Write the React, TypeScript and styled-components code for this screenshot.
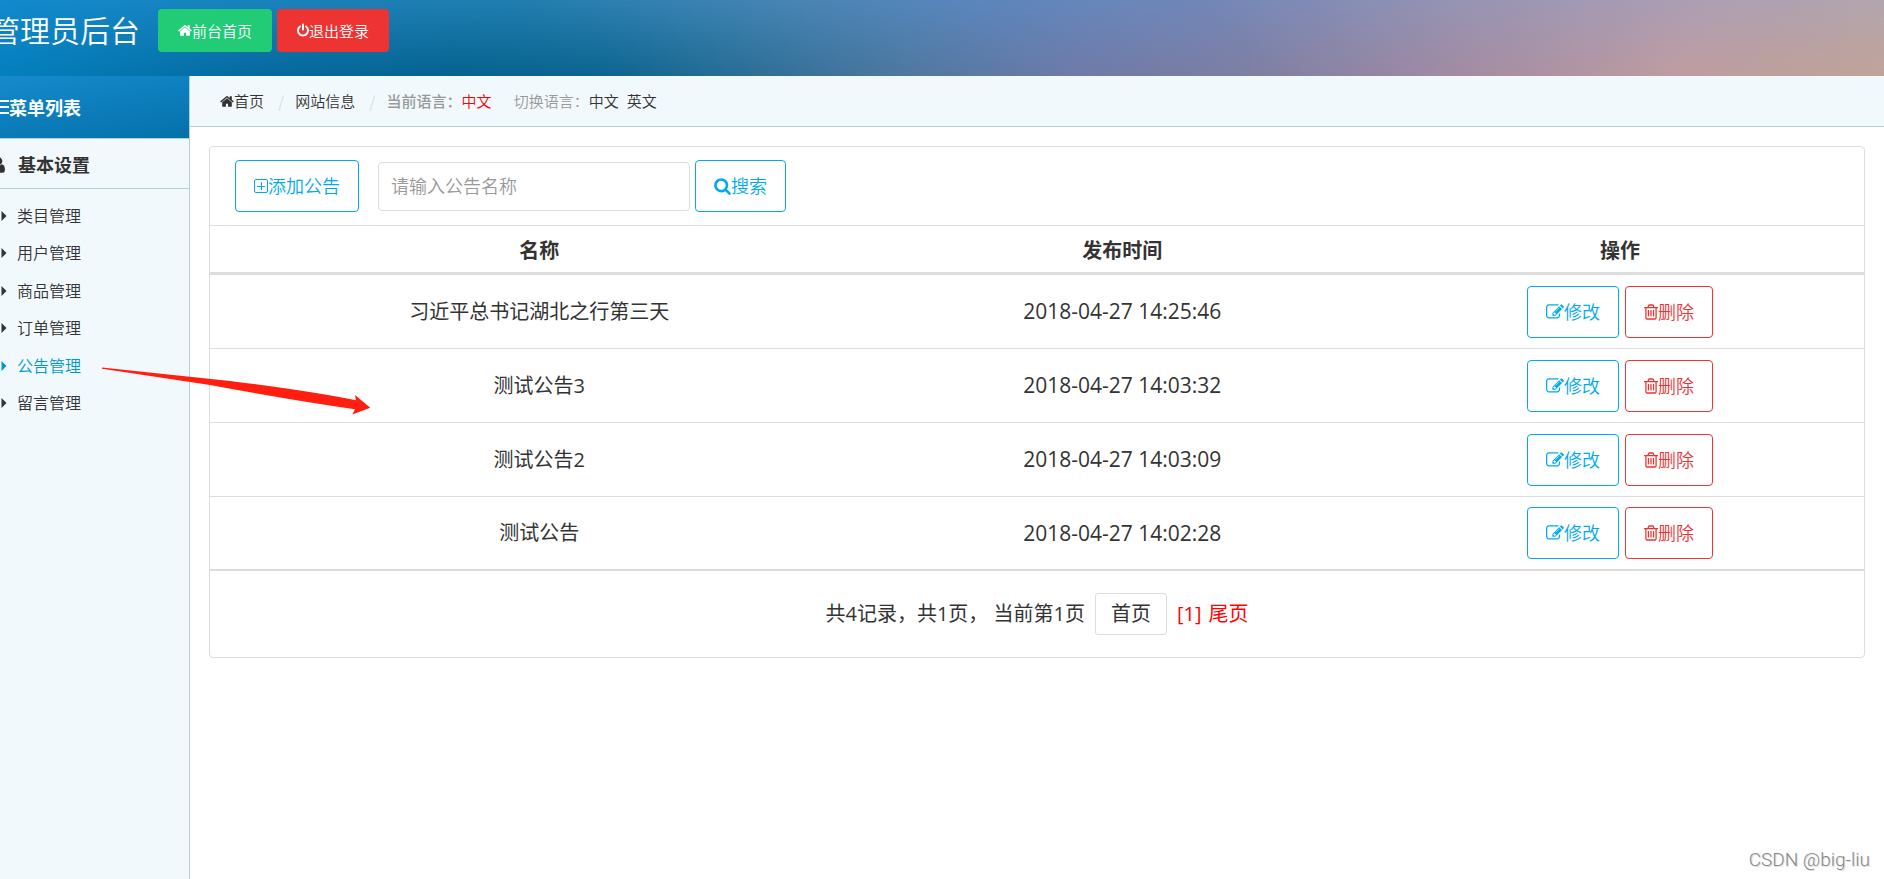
import React from 'react';
import styled, { createGlobalStyle, css } from 'styled-components';

const GlobalStyle = createGlobalStyle`
  *, *::before, *::after { box-sizing: border-box; }
  body {
    margin: 0;
    background: #fff;
    color: #333;
    font-family: 'Open Sans', 'Noto Sans CJK SC', sans-serif;
    font-size: 15px;
    font-weight: 350;
    line-height: 24px;
  }
  a { color: inherit; text-decoration: none; }
  ul, ol { list-style: none; margin: 0; padding: 0; }
  button, input { font-family: inherit; font-weight: 350; }
`;

/* ---------- icons ---------- */

const Glyph = styled.svg<{ $w: number; $h: number }>`
  flex: none;
  display: block;
  width: ${p => p.$w}px;
  height: ${p => p.$h}px;
  fill: currentColor;
`;

const HomeIcon = () => (
  <Glyph $w={14} $h={15} viewBox="64 0 1664 1792" aria-hidden="true">
    <path d="M1472 992v480q0 26-19 45t-45 19h-384v-384h-256v384h-384q-26 0-45-19t-19-45v-480q0-1 .5-3t.5-3l575-474 575 474q1 2 1 6zm223-69l-62 74q-8 9-21 11h-3q-13 0-21-7l-692-577-692 577q-12 8-24 7-13-2-21-11l-62-74q-8-10-7-23.500t11-21.500l719-599q32-26 76-26t76 26l244 204v-195q0-14 9-23t23-9h192q14 0 23 9t9 23v408l219 182q10 8 11 21.500t-7 23.500z" />
  </Glyph>
);

const PowerIcon = () => (
  <Glyph $w={12} $h={15} viewBox="128 0 1536 1792" aria-hidden="true">
    <path d="M1664 896q0 156-61 298t-164 245-245 164-298 61-298-61-245-164-164-245-61-298q0-182 80.500-343t226.500-270q43-32 95.500-25t83.500 50q32 42 24.500 94.500t-49.500 84.500q-98 74-151.500 181t-53.500 228q0 104 40.500 198.500t109.500 163.500 163.500 109.500 198.500 40.500 198.500-40.500 163.500-109.500 109.500-163.500 40.500-198.500q0-121-53.500-228t-151.500-181q-42-32-49.500-84.500t24.500-94.500q31-43 84-50t95 25q146 109 226.500 270t80.500 343zm-640-768v640q0 52-38 90t-90 38-90-38-38-90v-640q0-52 38-90t90-38 90 38 38 90z" />
  </Glyph>
);

const SearchIcon = () => (
  <Glyph $w={17} $h={18} viewBox="64 0 1664 1792" aria-hidden="true">
    <path d="M1216 832q0-185-131.500-316.500t-316.500-131.500-316.500 131.500-131.500 316.500 131.500 316.500 316.500 131.500 316.500-131.500 131.500-316.500zm512 832q0 52-38 90t-90 38q-54 0-90-38l-343-342q-179 124-399 124-143 0-273.500-55.500t-225-150-150-225-55.500-273.500 55.500-273.500 150-225 225-150 273.500-55.500 273.500 55.500 225 150 150 225 55.500 273.500q0 220-124 399l343 343q37 37 37 90z" />
  </Glyph>
);

const EditIcon = () => (
  <Glyph $w={18} $h={18} viewBox="0 0 1792 1792" aria-hidden="true">
    <path d="M888 1184l116-116-152-152-116 116v56h96v96h56zm440-720q-16-16-33 1l-350 350q-17 17-1 33t33-1l350-350q17-17 1-33zm80 594v190q0 119-84.500 203.500t-203.500 84.500h-832q-119 0-203.500-84.500t-84.500-203.500v-832q0-119 84.500-203.500t203.500-84.500h832q63 0 117 25 15 7 18 23 3 17-9 29l-49 49q-14 14-32 8-23-6-45-6h-832q-66 0-113 47t-47 113v832q0 66 47 113t113 47h832q66 0 113-47t47-113v-126q0-13 9-22l64-64q15-15 35-7t20 29zm-96-738l288 288-672 672h-288v-288zm444 132l-92 92-288-288 92-92q28-28 68-28t68 28l152 152q28 28 28 68t-28 68z" />
  </Glyph>
);

const TrashIcon = () => (
  <Glyph $w={14} $h={18} viewBox="192 0 1408 1792" aria-hidden="true">
    <path d="M704 736v576q0 14-9 23t-23 9h-64q-14 0-23-9t-9-23v-576q0-14 9-23t23-9h64q14 0 23 9t9 23zm256 0v576q0 14-9 23t-23 9h-64q-14 0-23-9t-9-23v-576q0-14 9-23t23-9h64q14 0 23 9t9 23zm256 0v576q0 14-9 23t-23 9h-64q-14 0-23-9t-9-23v-576q0-14 9-23t23-9h64q14 0 23 9t9 23zm128 724v-948h-896v948q0 22 7 40.500t14.500 27 10.500 8.500h832q3 0 10.500-8.500t14.500-27 7-40.500zm-672-1076h448l-48-117q-7-9-17-11h-317q-10 2-17 11zm928 32v64q0 14-9 23t-23 9h-96v948q0 83-47 143.500t-113 60.500h-832q-66 0-113-58.500t-47-141.500v-952h-96q-14 0-23-9t-9-23v-64q0-14 9-23t23-9h309l70-167q15-37 54-63t79-26h320q40 0 79 26t54 63l70 167h309q14 0 23 9t9 23z" />
  </Glyph>
);

const PlusSquareIcon = () => (
  <Glyph $w={14} $h={18} viewBox="0 0 14 18" aria-hidden="true">
    <path
      d="M2 2.500h10a1.500 1.500 0 0 1 1.500 1.500v10a1.500 1.500 0 0 1-1.500 1.500h-10a1.500 1.500 0 0 1-1.500-1.500v-10a1.500 1.500 0 0 1 1.500-1.500zM7.500 5v8M3 9.500h8"
      fill="none"
      stroke="currentColor"
    />
  </Glyph>
);

const BarsIcon = () => (
  <Glyph $w={15} $h={18} viewBox="0 0 15 18" aria-hidden="true">
    <path d="M0 1h15v2H0zM0 7h15v2H0zM0 13h15v2H0z" />
  </Glyph>
);

const UserIcon = () => (
  <Glyph $w={13} $h={18} viewBox="256 0 1280 1792" aria-hidden="true">
    <path d="M1536 1399q0 109-62.500 187t-150.500 78h-854q-88 0-150.500-78t-62.500-187q0-85 8.500-160.500t31.500-152 58.500-131 94-89 134.500-34.500q131 128 313 128t313-128q76 0 134.500 34.500t94 89 58.500 131 31.500 152 8.500 160.500zm-256-887q0 159-112.500 271.500t-271.500 112.500-271.500-112.500-112.500-271.500 112.500-271.500 271.500-112.500 271.500 112.500 112.500 271.500z" />
  </Glyph>
);

const CaretIcon = () => (
  <Glyph $w={6} $h={10} viewBox="0 0 6 10" aria-hidden="true">
    <path d="M0.500 0L5.500 5L0.500 10Z" />
  </Glyph>
);

/* ---------- frame ---------- */

const Page = styled.div`
  position: relative;
  display: flex;
  flex-direction: column;
  min-height: 100vh;
  overflow: hidden;
`;

const Header = styled.header`
  position: relative;
  isolation: isolate;
  display: flex;
  align-items: flex-start;
  height: 76px;
  padding-top: 9px;
  color: #fff;
  background: linear-gradient(
    90deg,
    #0480be 0%, #056a9e 14%, #05638f 24%, #0c6590 32%, #2c6f97 40%,
    #4e78a0 48%, #6f7ba9 57%, #7d7fa3 66%, #a28ba3 77%, #bf9da1 89%, #c0a498 100%
  );

  &::before {
    content: '';
    position: absolute;
    inset: 0;
    z-index: -1;
    background: linear-gradient(
      90deg,
      #1289cd 0%, #1c80b8 18%, #227eaf 28%, #4a85b5 43%, #5b86bd 52%,
      #7286b8 64%, #9593b3 77%, #ab9db3 89%, #b3a5ae 100%
    );
    mask-image: linear-gradient(#000, transparent);
  }
`;

const SiteTitle = styled.h1`
  margin: 0 18px 0 -10px;
  font-size: 30px;
  font-weight: 350;
  line-height: 44px;
`;

const HeaderActions = styled.nav`
  display: flex;
  gap: 5px;
`;

const HeaderLink = styled.a<{ $bg: string }>`
  display: flex;
  align-items: center;
  height: 43px;
  padding: 0 20px;
  border-radius: 4px;
  background: ${p => p.$bg};
`;

const Body = styled.div`
  flex: 1;
  display: flex;
`;

/* ---------- sidebar ---------- */

const Sidebar = styled.aside`
  flex: none;
  width: 190px;
  border-right: 1px solid #b5cfd9;
  background: #f2f9fd;
`;

const SidebarTitle = styled.h2`
  display: flex;
  align-items: center;
  height: 63px;
  margin: 0;
  padding-top: 1px;
  border-bottom: 1px solid #b5cfd9;
  font-size: 18px;
  line-height: 26px;
  color: #fff;
  background: linear-gradient(170deg, #158acd, #0571aa);

  svg { margin-left: -6px; }
`;

const GroupTitle = styled.h3`
  display: flex;
  align-items: center;
  gap: 13px;
  height: 50px;
  margin: 0;
  padding-top: 2px;
  border-bottom: 1px solid #b5cfd9;
  font-size: 18px;
  line-height: 26px;

  svg { margin-left: -8px; }
`;

const Menu = styled.ul`
  display: grid;
  grid-auto-rows: 1fr;
  min-height: 225px;
  margin-top: 8px;
`;

const MenuLink = styled.a<{ $active?: boolean }>`
  display: flex;
  align-items: center;
  gap: 10px;
  height: 100%;
  padding-left: 1px;
  font-size: 16px;
  color: ${p => (p.$active ? '#09c' : '#333')};
`;

/* ---------- content ---------- */

const Main = styled.main`
  flex: 1;
  min-width: 0;
`;

const Breadcrumb = styled.ol`
  display: flex;
  align-items: center;
  height: 51px;
  padding-left: 30px;
  border-bottom: 1px solid #b5cfd9;
  background: #f2f9fd;
  color: #999;

  a { color: #333; }
`;

const Crumb = styled.li`
  display: flex;
  align-items: center;

  & + &::before {
    content: '/';
    padding: 0 11px 0 14px;
    font-family: 'Noto Sans CJK SC', sans-serif;
    font-size: 16px;
    font-weight: 400;
    color: #ddd;
  }
`;

const HomeLink = styled.a`
  display: flex;
  align-items: center;
`;

const LanguageLabel = styled.b`
  font-weight: 500;
`;

const CurrentLanguage = styled.span`
  margin-right: 22px;
  color: red;
`;

const LanguageLinks = styled.span`
  display: flex;
  gap: 8px;
`;

const Panel = styled.section`
  margin: 19px;
  border: 1px solid #ddd;
  border-radius: 4px;
`;

const Toolbar = styled.form`
  display: flex;
  align-items: center;
  padding: 13px 25px;
`;

const outlined = css<{ $tone?: 'danger' }>`
  display: inline-flex;
  align-items: center;
  height: 52px;
  padding: 0 18px;
  border: 1px solid ${p => (p.$tone === 'danger' ? '#e33' : '#0ae')};
  border-radius: 4px;
  background: #fff;
  color: ${p => (p.$tone === 'danger' ? '#e33' : '#0ae')};
  font-size: 18px;
  line-height: 26px;
  cursor: pointer;
`;

const OutlineButton = styled.button<{ $tone?: 'danger' }>`
  ${outlined}
`;

const SearchInput = styled.input`
  width: 312px;
  height: 49px;
  margin: 0 5px 0 19px;
  padding: 0 12px;
  border: 1px solid #ddd;
  border-radius: 4px;
  font-size: 18px;
  color: #333;

  &::placeholder { color: #999; opacity: 1; }
`;

const Table = styled.table`
  width: 100%;
  table-layout: fixed;
  border-collapse: separate;
  border-spacing: 0;
  border-top: 1px solid #ddd;
  text-align: center;
  font-size: 20px;
  line-height: 28px;
`;

const Th = styled.th<{ $width?: string }>`
  width: ${p => p.$width ?? 'auto'};
  height: 49px;
  padding: 3px 0 0;
  border-bottom: 3px solid #ddd;
`;

const Td = styled.td`
  height: 74px;
  padding: 0;
  border-bottom: 1px solid #ddd;
  font-weight: 400;

  tr:last-child > & { border-bottom-width: 2px; }
`;

const Timestamp = styled.time`
  font-size: 21px;
`;

const RowActions = styled.div`
  display: flex;
  justify-content: center;
  gap: 6px;
`;

const Pagination = styled.nav`
  display: flex;
  align-items: center;
  justify-content: center;
  height: 86px;
  font-size: 20px;
  font-weight: 400;
  line-height: 28px;
`;

const PageLink = styled.a`
  margin: 0 10px;
  padding: 6px 15px;
  border: 1px solid #ddd;
  border-radius: 3px;
`;

const PageMark = styled.a`
  margin-right: 7px;
  color: red;

  &:last-child { margin-right: 0; }
`;

/* ---------- overlays ---------- */

const Pointer = styled.svg`
  position: absolute;
  left: 100px;
  top: 360px;
  width: 280px;
  height: 60px;
  pointer-events: none;
`;

const Watermark = styled.span`
  position: absolute;
  right: 14px;
  bottom: 7px;
  font-family: Roboto, sans-serif;
  font-size: 19px;
  font-weight: 300;
  color: #888;
  text-shadow: 1px 1px 0 #ddd;
`;

const menuItems = ['类目管理', '用户管理', '商品管理', '订单管理', '公告管理', '留言管理'];

const notices = [
  { name: '习近平总书记湖北之行第三天', time: '2018-04-27 14:25:46' },
  { name: '测试公告3', time: '2018-04-27 14:03:32' },
  { name: '测试公告2', time: '2018-04-27 14:03:09' },
  { name: '测试公告', time: '2018-04-27 14:02:28' },
];

export default function App() {
  return (
    <>
      <GlobalStyle />
      <Page>
        <Header>
          <SiteTitle>管理员后台</SiteTitle>
          <HeaderActions>
            <HeaderLink href="#" $bg="#2c7"><HomeIcon />前台首页</HeaderLink>
            <HeaderLink href="#" $bg="#e33"><PowerIcon />退出登录</HeaderLink>
          </HeaderActions>
        </Header>
        <Body>
          <Sidebar>
            <SidebarTitle><BarsIcon />菜单列表</SidebarTitle>
            <GroupTitle><UserIcon />基本设置</GroupTitle>
            <Menu>
              {menuItems.map(item => (
                <li key={item}>
                  <MenuLink href="#" $active={item === '公告管理'}>
                    <CaretIcon />{item}
                  </MenuLink>
                </li>
              ))}
            </Menu>
          </Sidebar>
          <Main>
            <Breadcrumb>
              <Crumb><HomeLink href="#"><HomeIcon />首页</HomeLink></Crumb>
              <Crumb><a href="#">网站信息</a></Crumb>
              <Crumb>
                <LanguageLabel>当前语言：</LanguageLabel>
                <CurrentLanguage>中文</CurrentLanguage>
                切换语言：
                <LanguageLinks>
                  <a href="#">中文</a>
                  <a href="#">英文</a>
                </LanguageLinks>
              </Crumb>
            </Breadcrumb>
            <Panel>
              <Toolbar onSubmit={e => e.preventDefault()}>
                <OutlineButton type="button"><PlusSquareIcon />添加公告</OutlineButton>
                <SearchInput type="text" placeholder="请输入公告名称" aria-label="公告名称" />
                <OutlineButton type="submit"><SearchIcon />搜索</OutlineButton>
              </Toolbar>
              <Table>
                <thead>
                  <tr>
                    <Th $width="39.8%">名称</Th>
                    <Th>发布时间</Th>
                    <Th $width="29.5%">操作</Th>
                  </tr>
                </thead>
                <tbody>
                  {notices.map(n => (
                    <tr key={n.time}>
                      <Td>{n.name}</Td>
                      <Td><Timestamp>{n.time}</Timestamp></Td>
                      <Td>
                        <RowActions>
                          <OutlineButton type="button"><EditIcon />修改</OutlineButton>
                          <OutlineButton type="button" $tone="danger"><TrashIcon />删除</OutlineButton>
                        </RowActions>
                      </Td>
                    </tr>
                  ))}
                </tbody>
              </Table>
              <Pagination>
                共4记录，共1页，&nbsp;当前第1页
                <PageLink href="#">首页</PageLink>
                <PageMark href="#">[1]</PageMark>
                <PageMark href="#">尾页</PageMark>
              </Pagination>
            </Panel>
          </Main>
        </Body>
        <Pointer viewBox="100 360 280 60" aria-hidden="true">
          <path
            d="M102 367.500L230 381Q310 391 356 400.300L355 395L370.300 407.700L352.300 414.500L355 409.300Q290 400 210 385L102 368.800Z"
            fill="#ff1e10"
          />
        </Pointer>
        <Watermark>CSDN @big-liu</Watermark>
      </Page>
    </>
  );
}
